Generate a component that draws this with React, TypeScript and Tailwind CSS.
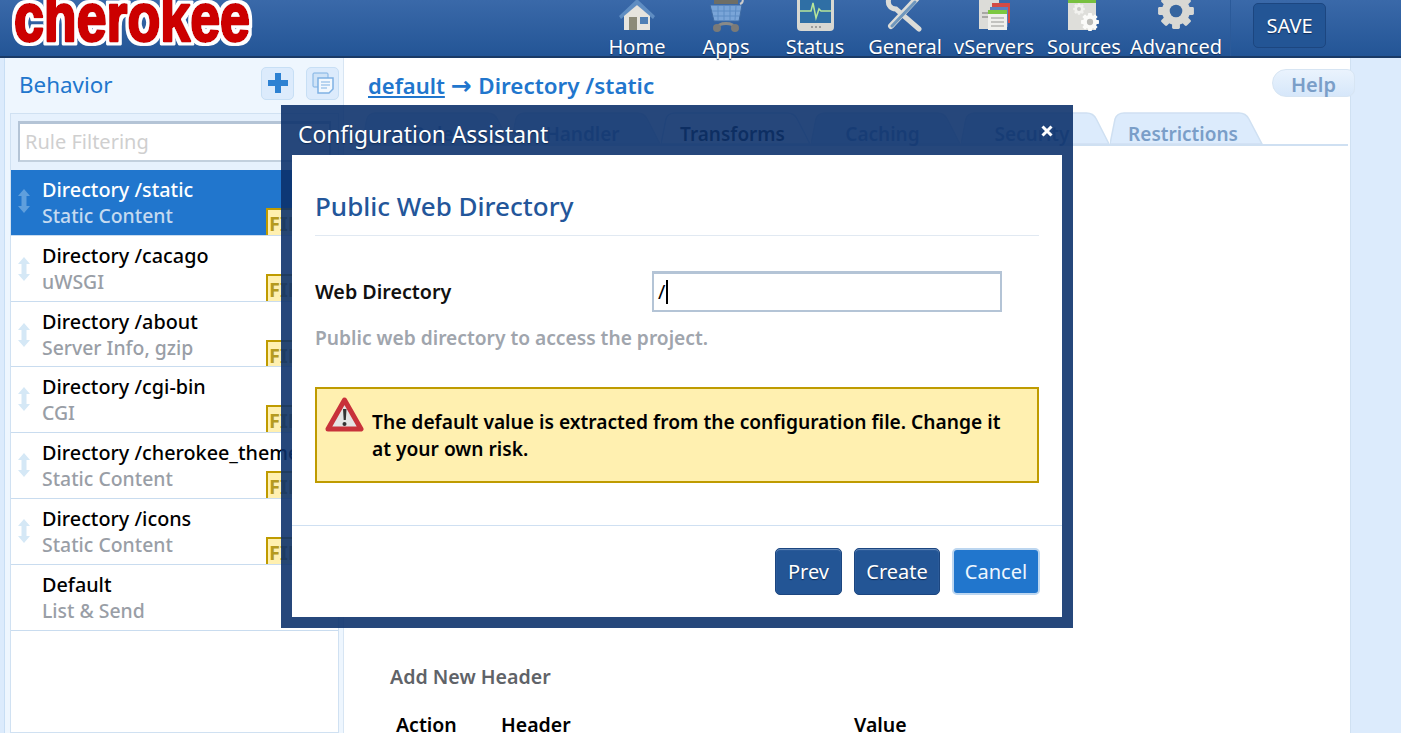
const rows = [
  ["Directory /static", "Static Content"],
  ["Directory /cacago", "uWSGI"],
  ["Directory /about", "Server Info, gzip"],
  ["Directory /cgi-bin", "CGI"],
  ["Directory /cherokee_themes", "Static Content"],
  ["Directory /icons", "Static Content"],
  ["Default", "List & Send"],
];
const heights = ["h-[66px]", "h-[66px] pt-[1px]", "h-[65px] pt-[2px]", "h-[66px]", "h-[66px]", "h-[66px]", "h-[66px]"];

function Logo() {
  return (
    <svg width="270" height="56" viewBox="0 0 270 56" className="shrink-0">
      <defs>
        <filter id="logo-outline" x="-5%" y="-30%" width="110%" height="160%">
          <feMorphology in="SourceAlpha" operator="dilate" radius="3" result="wide" />
          <feGaussianBlur in="wide" stdDeviation="0.7" result="soft" />
          <feFlood floodColor="#ffffff" result="white" />
          <feComposite in="white" in2="soft" operator="in" result="outline" />
          <feMerge>
            <feMergeNode in="outline" />
            <feMergeNode in="SourceGraphic" />
          </feMerge>
        </filter>
      </defs>
      <g filter="url(#logo-outline)">
        <text
          transform="translate(14 41) scale(0.79 1)"
          fontFamily="'Liberation Sans', sans-serif"
          fontWeight="700"
          fontSize="68"
          fill="#cc0000"
          stroke="#cc0000"
          strokeWidth="3"
          strokeLinejoin="round"
        >
          cherokee
        </text>
      </g>
    </svg>
  );
}

function HomeIcon() {
  return (
    <svg width="40" height="34" viewBox="0 0 40 34">
      <path d="M2 17 20 0l18 17-2 3L20 6 4 20z" fill="#5f8dc2" />
      <path d="M7 17 20 6l13 11v14H7z" fill="#e6e4de" />
      <rect x="12" y="18" width="8" height="13" fill="#8c8a78" />
      <rect x="23" y="18" width="8" height="7" fill="#4f7fb5" />
    </svg>
  );
}
function AppsIcon() {
  return (
    <svg width="40" height="34" viewBox="0 0 40 34">
      <rect x="8" y="-2" width="24" height="7" fill="#6e6e66" />
      <path d="M4 6h32l-3 16H8z" fill="#7aa5d8" stroke="#3e6aa2" />
      <path d="M12 7v14M18 7v14M24 7v14M30 7l-1 14M6 12h28M7 17h26" stroke="#5d8cc4" strokeWidth="1" />
      <path d="M34 5c4-2 3-5 1-6" stroke="#ccc" strokeWidth="2" fill="none" />
      <path d="M11 29c2-6 16-6 18 0" stroke="#8a8a88" strokeWidth="3" fill="none" />
      <circle cx="11" cy="29" r="4" fill="#7a7a78" />
      <circle cx="29" cy="29" r="4" fill="#7a7a78" />
    </svg>
  );
}
function StatusIcon() {
  return (
    <svg width="40" height="34" viewBox="0 0 40 34">
      <rect x="2" y="-6" width="37" height="38" rx="4" fill="#d8d8d2" />
      <rect x="5" y="-3" width="31" height="27" fill="#2f6fa5" />
      <path d="M5 12h11l2-8 3 15 3-9 2 2h10" stroke="#b6e69a" strokeWidth="1.500" fill="none" />
      <circle cx="17" cy="28" r="1" fill="#888" />
      <circle cx="21" cy="28" r="1" fill="#888" />
      <circle cx="25" cy="28" r="1" fill="#888" />
    </svg>
  );
}
function GeneralIcon() {
  return (
    <svg width="40" height="34" viewBox="0 0 40 34">
      <path d="M4 -1c-2 6 1 11 7 11l23 20" stroke="#dcdcd8" strokeWidth="5" fill="none" strokeLinecap="round" />
      <path d="M33 -2 6 27" stroke="#dcdcd8" strokeWidth="6" strokeLinecap="round" />
      <path d="M30 3 7 27" stroke="#6f97bd" strokeWidth="3" strokeLinecap="round" />
    </svg>
  );
}
function ServersIcon() {
  return (
    <svg width="36" height="34" viewBox="0 0 36 34">
      <rect x="3" y="-2" width="20" height="32" fill="#dcdcd8" />
      <path d="M6 14h8M6 18h8" stroke="#a8a8a4" strokeWidth="2" />
      <rect x="16" y="4" width="18" height="20" fill="#d24a45" />
      <rect x="14" y="8" width="18" height="20" fill="#5a7fc0" />
      <rect x="12" y="11" width="19" height="20" fill="#f0f0ec" />
      <rect x="12" y="11" width="19" height="4" fill="#7cc840" />
      <path d="M15 19h13M15 23h13M15 27h13" stroke="#b4b4b0" strokeWidth="1.500" />
    </svg>
  );
}
function Gear({ x, y, r, fill, hole }: { x: number; y: number; r: number; fill: string; hole: string }) {
  const teeth = [0, 45, 90, 135];
  return (
    <g transform={`translate(${x} ${y})`}>
      {teeth.map((a) => (
        <rect key={a} x={-r * 0.28} y={-r * 1.28} width={r * 0.56} height={r * 2.56} rx={r * 0.1} fill={fill} transform={`rotate(${a})`} />
      ))}
      <circle r={r} fill={fill} />
      <circle r={r * 0.45} fill={hole} />
    </g>
  );
}
function SourcesIcon() {
  return (
    <svg width="36" height="34" viewBox="0 0 36 34">
      <rect x="2" y="-4" width="28" height="35" fill="#dededa" />
      <rect x="2" y="-4" width="28" height="8" fill="#78c040" />
      <Gear x={13} y={10} r={4.500} fill="#f2f2ef" hole="#c8c8c4" />
      <Gear x={24} y={23} r={7} fill="#fbfbf9" hole="#bcbcb8" />
    </svg>
  );
}
function AdvancedIcon() {
  return (
    <svg width="40" height="34" viewBox="0 0 40 34">
      <Gear x={20} y={12} r={14} fill="#d8d8d4" hole="#36659f" />
    </svg>
  );
}

function NavItem({ label, icon, w }: { label: string; icon: React.ReactNode; w: string }) {
  return (
    <div className={`${w} flex shrink-0 flex-col items-center`}>
      <div className="flex h-[34px] shrink-0 items-end justify-center overflow-hidden pb-[1px]">{icon}</div>
      <div className="mt-[2px] shrink-0 whitespace-nowrap text-[20px] leading-[22px] text-white [text-shadow:0_1px_1px_#0d2a55]">{label}</div>
    </div>
  );
}

function Arrow({ active }: { active: boolean }) {
  return (
    <svg width="14" height="26" viewBox="0 0 14 26" className={active ? "mt-[-3px] opacity-40" : "mt-[-1px]"}>
      <path d="M7 1 13 8H9.500v10H13l-6 7-6-7h3.500V8H1z" fill={active ? "#bcdcf5" : "#d5e8f6"} />
    </svg>
  );
}

function Tab({ label, w, active }: { label: string; w: string; active?: boolean }) {
  return (
    <div className={`${w} relative flex h-[32px] shrink-0 items-center justify-center pr-[7px] pt-[12px]`}>
      <svg className="absolute inset-0 h-full w-full" viewBox="0 0 152 32" preserveAspectRatio="none">
        <path
          d="M0 32 5 7Q7 1 14 1H128Q135 1 138 7L151 32z"
          fill={active ? "#ffffff" : "#dcebfc"}
          stroke="#cfe0f2"
          strokeWidth="1.500"
        />
      </svg>
      <span className={`relative text-[19px] font-semibold leading-[24px] ${active ? "text-[#222222]" : "text-[#7a9ec8]"}`}>{label}</span>
    </div>
  );
}

const primaryBtn =
  "flex h-[47px] items-center justify-center rounded-[5px] border border-[#1c4680] bg-[#235595] text-[20px] text-white shadow-[inset_0_1px_1px_#6d8fbc] [text-shadow:0_1px_1px_#0d2a55]";

export default function App() {
  return (
    <div className="relative h-[733px] w-[1401px] overflow-hidden bg-white font-['Noto_Sans','Open_Sans',sans-serif]">
      {/* header */}
      <header className="flex h-[58px] items-stretch border-b-2 border-[#1a3a66] bg-gradient-to-b from-[#3a69a9] to-[#235596]">
        <div className="w-[592px] shrink-0">
          <Logo />
        </div>
        <nav className="flex">
          <NavItem label="Home" icon={<HomeIcon />} w="w-[90px]" />
          <NavItem label="Apps" icon={<AppsIcon />} w="w-[88px]" />
          <NavItem label="Status" icon={<StatusIcon />} w="w-[90px]" />
          <NavItem label="General" icon={<GeneralIcon />} w="w-[90px]" />
          <NavItem label="vServers" icon={<ServersIcon />} w="w-[88px]" />
          <NavItem label="Sources" icon={<SourcesIcon />} w="w-[92px]" />
          <NavItem label="Advanced" icon={<AdvancedIcon />} w="w-[92px]" />
        </nav>
        <div className="ml-[8px] h-[56px] w-px bg-[#2b5a99]" />
        <div className="ml-[22px] mt-[3px] flex h-[45px] w-[73px] items-center justify-center rounded-[5px] border border-[#1c4680] bg-[#235595] text-[20px] text-white [text-shadow:0_1px_1px_#0d2a55]">
          SAVE
        </div>
      </header>

      <div className="flex h-[675px]">
        {/* left strip */}
        <div className="w-[5px] shrink-0 border-r border-[#c8def4] bg-[#dcebfc]" />
        {/* sidebar */}
        <aside className="flex w-[339px] shrink-0 flex-col border-r border-[#d7e5f3] bg-[#eef6fe]">
          <div className="flex h-[55px] shrink-0 items-center">
            <div className="ml-[14px] mt-[-2px] text-[22.400px] leading-[28px] text-[#2176cd]">Behavior</div>
            <div className="ml-auto mr-[4px] mt-[-5px] flex gap-[12px]">
              <div className="flex h-[33px] w-[33px] items-center justify-center rounded-[5px] border border-[#c7dff5] bg-[#dcebfc]">
                <svg width="20" height="20" viewBox="0 0 20 20"><path d="M7 0h6v7h7v6h-7v7H7v-7H0V7h7z" fill="#2d81d2" /></svg>
              </div>
              <div className="flex h-[33px] w-[33px] items-center justify-center rounded-[5px] border border-[#c7dff5] bg-[#dcebfc]">
                <svg width="24" height="24" viewBox="0 0 24 24" fill="none" stroke="#7fb1e3">
                  <rect x="2" y="2" width="15" height="14" rx="1" fill="#cfe3f7" />
                  <path d="M7 7h15v11l-4 4H7z" fill="#f2f8fe" strokeWidth="1.500" />
                  <path d="M10 11h9M10 14h9M10 17h6" />
                </svg>
              </div>
            </div>
          </div>
          <div className="ml-[5px] mr-[4px] flex flex-1 flex-col border border-[#d0e1f2] bg-[#e6f1fd]">
            <div className="flex h-[56px] shrink-0 items-start px-[7px] pt-[7px]">
              <div className="flex h-[41px] w-full items-center border-2 border-t-[3px] border-[#b4c4d6] border-b-[#c2d0de] bg-white pl-[5px] text-[20px] text-[#cfcfcf]">
                Rule Filtering
              </div>
            </div>
            <div className="flex-1 bg-white">
              {rows.map(([title, sub], i) => (
                <div
                  key={title}
                  className={`${heights[i]} relative flex items-center overflow-hidden border-b border-[#c9dcef] pl-[6px] ${
                    i === 0 ? "bg-[#2176cd]" : "bg-white"
                  }`}
                >
                  <div className="w-[25px] shrink-0">{i < 6 && <Arrow active={i === 0} />}</div>
                  <div className="whitespace-nowrap font-medium leading-[26px]">
                    <div className={`text-[19.800px] ${i === 0 ? "text-white" : "text-black"}`}>{title}</div>
                    <div className={`text-[19.400px] ${i === 0 ? "text-[#c5daf0]" : "text-[#999ea6]"}`}>{sub}</div>
                  </div>
                  {i < 6 && (
                    <div className="absolute left-[255px] top-[38px] flex h-[32px] w-[40px] items-center border-2 border-[#bf9b00] bg-[#fff0b0] pl-[1px] text-[20px] font-bold text-[#b59a1f]">
                      FIN
                    </div>
                  )}
                </div>
              ))}
            </div>
          </div>
        </aside>

        {/* main */}
        <main className="w-[1006px] shrink-0 pl-[24px]">
          <div className="flex h-[55px] items-center">
            <div className="text-[22px] font-semibold leading-[30px] text-[#2176cd]">
              <span className="underline">default</span> <span className="font-['DejaVu_Sans',sans-serif] text-[25px] font-bold">→</span> <span className="ml-[1px] text-[22.400px]">Directory /static</span>
            </div>
            <div className="relative z-10 ml-auto mr-[-5px] mt-[-5px] flex h-[28px] w-[83px] items-center justify-center rounded-l-[14px] rounded-r-[8px] border border-[#d7e5f3] bg-gradient-to-b from-[#eaf3fd] to-[#d6e7fa] pt-[4px] text-[20px] font-semibold text-[#7a9ec8]">
              Help
            </div>
          </div>
          <div className="ml-[-6px] mr-[2px] flex h-[33px] items-end border-b-2 border-[#cfe0f2]">
            <Tab label="Rule" w="w-[149px]" />
            <Tab label="Handler" w="w-[150px]" />
            <Tab label="Transforms" w="w-[150px]" active />
            <Tab label="Caching" w="w-[150px]" />
            <Tab label="Security" w="w-[149px]" />
            <Tab label="Restrictions" w="w-[153px]" />
          </div>
          <div className="ml-[22px] mt-[518px] text-[19.600px] font-semibold leading-[26px] text-[#5f6368]">Add New Header</div>
          <div className="mt-[22px] flex text-[19.500px] font-semibold leading-[26px] text-black">
            <div className="ml-[28px] w-[105px]">Action</div>
            <div className="w-[353px]">Header</div>
            <div>Value</div>
          </div>
        </main>

        {/* right strip */}
        <div className="flex-1 border-l border-[#d0e1f2] bg-[#dcebfc]" />
      </div>

      {/* modal */}
      <div className="absolute left-[281px] top-[105px] z-20 flex h-[523px] w-[792px] flex-col bg-[#0b306b]/[0.89] px-[11px] pb-[11px]">
        <div className="relative flex h-[50px] shrink-0 items-center pl-[6px] pt-[10px] text-[22.800px] text-white [text-shadow:0_1px_1px_#0d2a55]">
          Configuration Assistant
          <svg className="absolute right-[9px] top-[20px]" width="12" height="12" viewBox="0 0 12 12"><path d="M1.500 1.500l9 9M10.500 1.500l-9 9" stroke="#fff" strokeWidth="3" /></svg>
        </div>
        <div className="flex flex-1 flex-col bg-white">
          <div className="flex-1 px-[23px]">
            <div className="flex h-[81px] items-center border-b border-[#e1e9f2] pt-[23px] text-[26px] font-medium text-[#23569a]">Public Web Directory</div>
            <div className="mt-[35px] flex items-center">
              <div className="w-[337px] text-[19.700px] font-semibold text-[#111]">Web Directory</div>
              <div className="flex h-[41px] w-[350px] items-center border-2 border-t-[3px] border-[#b4c4d6] pl-[4px] text-[20px] text-black">
                /<span className="ml-[1px] h-[24px] w-[2px] bg-black" />
              </div>
            </div>
            <div className="mt-[12px] text-[19.200px] font-semibold text-[#a0a5ad]">Public web directory to access the project.</div>
            <div className="mt-[34px] flex h-[96px] items-start border-2 border-[#bf9b00] bg-[#fff0b0] pl-[7px]">
              <svg className="mt-[7px] shrink-0" width="41" height="40" viewBox="0 0 41 40">
                <path d="M20.500 4 37 33H4z" fill="#e4e4e4" stroke="#c8323a" strokeWidth="5" strokeLinejoin="round" />
                <path d="M19 13h3.500l-.7 11h-2.100z" fill="#333" />
                <circle cx="20.500" cy="28" r="2" fill="#333" />
              </svg>
              <div className="ml-[7px] mt-[19px] w-[640px] text-[19.200px] font-semibold leading-[27px] text-black">
                The default value is extracted from the configuration file. Change it at your own risk.
              </div>
            </div>
          </div>
          <div className="flex h-[92px] shrink-0 items-start justify-end gap-[12px] border-t border-[#cfe0f2] pr-[22px] pt-[22px]">
            <div className={`${primaryBtn} w-[67px]`}>Prev</div>
            <div className={`${primaryBtn} w-[86px]`}>Create</div>
            <div className="flex h-[47px] w-[88px] items-center justify-center rounded-[5px] border-2 border-[#bcd6f0] bg-[#2176cd] text-[20px] text-[#eef6fe]">Cancel</div>
          </div>
        </div>
      </div>
    </div>
  );
}
